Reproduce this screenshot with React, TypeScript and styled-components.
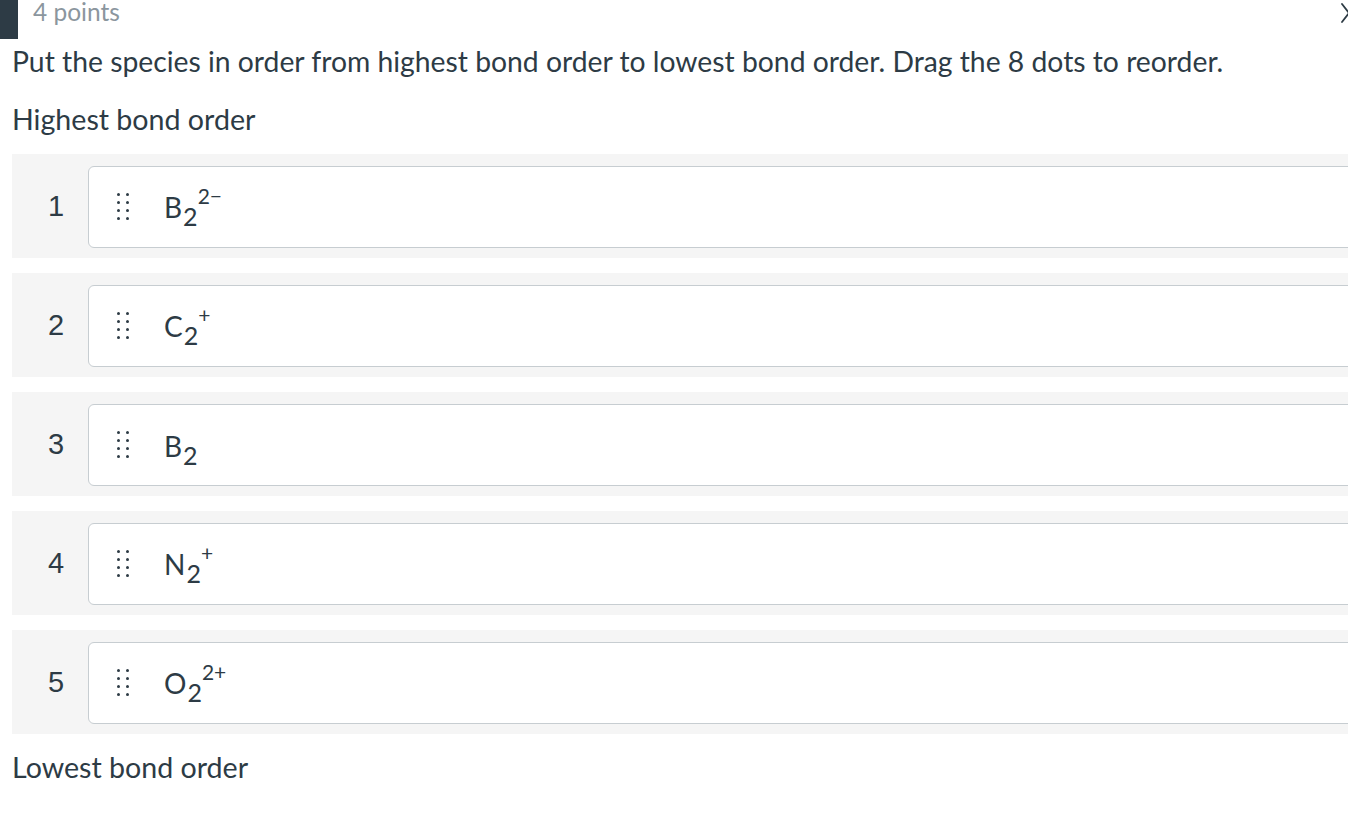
import React from "react";
import styled, { createGlobalStyle } from "styled-components";

const Global = createGlobalStyle`
  html, body { margin: 0; padding: 0; background: #ffffff; overflow: hidden; }
  body { font-family: Lato, "Noto Sans", sans-serif; color: #2d3b45; }
`;

const Page = styled.div`
  width: 1348px;
  overflow: hidden;
`;

const Header = styled.div`
  display: flex;
  align-items: flex-start;
  height: 39px;
`;

const Bar = styled.div`
  width: 18px;
  height: 39px;
  background: #2d3b45;
  flex: none;
`;

const Points = styled.div`
  margin-left: 15px;
  font-size: 24.5px;
  line-height: 24px;
  color: #8b969e;
  flex: 1;
`;

const Close = styled.div`
  width: 20px;
  height: 22px;
  margin-right: -11px;
  margin-top: 2px;
  color: #2d3b45;
  flex: none;
`;

const Body = styled.div`
  padding-left: 12px;
`;

const Question = styled.p`
  margin: 2px 0 0;
  font-size: 28.3px;
  line-height: 40px;
  white-space: nowrap;
`;

const Label = styled.div<{ $top: number }>`
  margin-top: ${(p) => p.$top}px;
  font-size: 28.6px;
  line-height: 40px;
`;

const List = styled.div`
  margin-top: 15px;
  display: flex;
  flex-direction: column;
  gap: 15px;
  width: 1400px;
`;

const Row = styled.div`
  display: flex;
  align-items: center;
  height: 104px;
  background: #f5f5f5;
`;

const Num = styled.div`
  width: 76px;
  padding-left: 12px;
  box-sizing: border-box;
  text-align: center;
  font-family: "Liberation Sans", Arial, sans-serif;
  font-size: 29px;
  color: #2d3b45;
  flex: none;
`;

const Card = styled.div`
  flex: 1;
  height: 80px;
  margin-top: 1px;
  background: #ffffff;
  border: 1px solid #c7cdd1;
  border-radius: 6px;
  display: flex;
  align-items: center;
  padding-left: 28px;
`;

const Handle = styled.div`
  display: grid;
  grid-template-columns: repeat(2, 3px);
  grid-template-rows: repeat(4, 3px);
  column-gap: 6px;
  row-gap: 5px;
  flex: none;
`;

const Dot = styled.span`
  width: 3px;
  height: 3px;
  border-radius: 50%;
  background: #2d3b45;
`;

const Species = styled.div`
  margin-left: 35px;
  margin-top: 4px;
  font-size: 28px;
  line-height: 40px;
  color: #2d3b45;
  white-space: nowrap;
`;

const Sub = styled.span`
  font-size: 25px;
  position: relative;
  top: 8px;
  margin-left: 1px;
`;

const Sup = styled.span`
  font-size: 21px;
  position: relative;
  top: -14px;
`;

type Item = { el: string; charge?: string };

const items: Item[] = [
  { el: "B", charge: "2\u2212" },
  { el: "C", charge: "+" },
  { el: "B" },
  { el: "N", charge: "+" },
  { el: "O", charge: "2+" },
];

const DragHandle = () => (
  <Handle>
    {Array.from({ length: 8 }).map((_, i) => (
      <Dot key={i} />
    ))}
  </Handle>
);

export default function App() {
  return (
    <Page>
      <Global />
      <Header>
        <Bar />
        <Points>4 points</Points>
        <Close>
          <svg width="20" height="22" viewBox="0 0 20 22" fill="none" stroke="currentColor" strokeWidth="1.8" strokeLinecap="round">
            <path d="M3 2 L17 20 M17 2 L3 20" />
          </svg>
        </Close>
      </Header>
      <Body>
        <Question>
          Put the species in order from highest bond order to lowest bond order. Drag the 8 dots to reorder.
        </Question>
        <Label $top={18}>Highest bond order</Label>
        <List>
          {items.map((it, i) => (
            <Row key={i}>
              <Num>{i + 1}</Num>
              <Card>
                <DragHandle />
                <Species>
                  {it.el}
                  <Sub>2</Sub>
                  {it.charge && <Sup>{it.charge}</Sup>}
                </Species>
              </Card>
            </Row>
          ))}
        </List>
        <Label $top={13}>Lowest bond order</Label>
      </Body>
    </Page>
  );
}
